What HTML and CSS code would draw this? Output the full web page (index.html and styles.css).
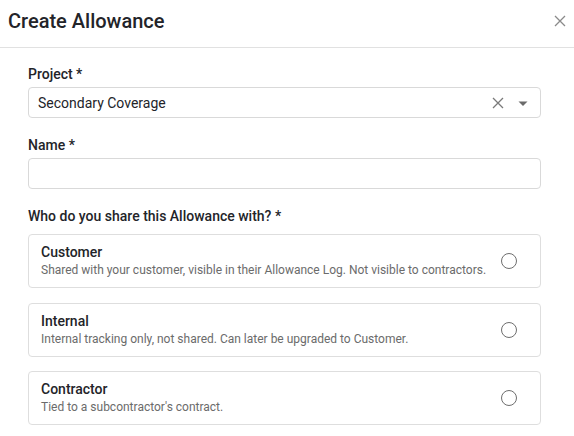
FILE: index.html
```html
<!DOCTYPE html>
<html lang="en">
<head>
<meta charset="utf-8">
<title>Create Allowance</title>
<link rel="stylesheet" href="styles.css">
</head>
<body>
<div class="dialog">
  <header class="dialog-header">
    <h1 class="dialog-title">Create Allowance</h1>
    <button class="icon-btn close-btn" aria-label="Close">
      <svg width="12" height="12" viewBox="0 0 12 12"><path d="M1 1L11 11M11 1L1 11" stroke="#8a8a8a" stroke-width="1.3" fill="none"/></svg>
    </button>
  </header>
  <main class="dialog-body">
    <div class="field">
      <label class="field-label">Project *</label>
      <div class="select">
        <span class="select-value">Secondary Coverage</span>
        <span class="select-clear">
          <svg width="12" height="12" viewBox="0 0 12 12"><path d="M1 1L11 11M11 1L1 11" stroke="#7a7a7a" stroke-width="1.3" fill="none"/></svg>
        </span>
        <span class="select-arrow">
          <svg width="10" height="5" viewBox="0 0 10 5"><path d="M0.5 0.5H9.5L5 5Z" fill="#6b6b6b"/></svg>
        </span>
      </div>
    </div>
    <div class="field">
      <label class="field-label">Name *</label>
      <input class="text-input" type="text">
    </div>
    <div class="field">
      <label class="field-label field-label-gap">Who do you share this Allowance with? *</label>
      <div class="options">
        <div class="option">
          <div class="option-text">
            <div class="option-title">Customer</div>
            <div class="option-desc">Shared with your customer, visible in their Allowance Log. Not visible to contractors.</div>
          </div>
          <span class="radio"></span>
        </div>
        <div class="option">
          <div class="option-text">
            <div class="option-title">Internal</div>
            <div class="option-desc">Internal tracking only, not shared. Can later be upgraded to Customer.</div>
          </div>
          <span class="radio"></span>
        </div>
        <div class="option">
          <div class="option-text">
            <div class="option-title">Contractor</div>
            <div class="option-desc">Tied to a subcontractor's contract.</div>
          </div>
          <span class="radio"></span>
        </div>
      </div>
    </div>
  </main>
</div>
</body>
</html>
```
FILE: styles.css
```css
* { box-sizing: border-box; }

html, body {
  margin: 0;
  padding: 0;
  background: #ffffff;
  font-family: Roboto, "Liberation Sans", Arial, sans-serif;
  color: #232429;
}

.dialog {
  width: 574px;
}

.dialog-header {
  height: 48px;
  display: flex;
  align-items: center;
  justify-content: space-between;
  padding: 0 8px 5px 8px;
  border-bottom: 1px solid #e1e1e1;
}

.dialog-title {
  margin: 0;
  font-size: 20px;
  font-weight: 500;
  line-height: 24px;
  color: #232429;
}

.icon-btn {
  border: 0;
  background: none;
  padding: 0;
  display: flex;
}

.dialog-body {
  padding: 16px 33px 0 28px;
  display: flex;
  flex-direction: column;
  gap: 17px;
}

.field {
  display: flex;
  flex-direction: column;
}

.field-label {
  font-size: 14px;
  font-weight: 500;
  line-height: 20px;
  margin-bottom: 3px;
  color: #232429;
}

.field-label-gap {
  margin-bottom: 8px;
}

.select,
.text-input {
  height: 31px;
  border: 1px solid #d9d9d9;
  border-radius: 4px;
  background: #fff;
}

.select {
  display: flex;
  align-items: center;
  padding: 0 12px 0 9px;
}

.select-value {
  flex: 1;
  font-size: 14px;
  color: #232429;
}

.select-clear {
  display: flex;
  margin-right: 14px;
}

.select-arrow {
  display: flex;
  margin-top: 1px;
}

.text-input {
  width: 100%;
  font: inherit;
  padding: 0 9px;
  outline: none;
}

.options {
  display: flex;
  flex-direction: column;
  gap: 14.5px;
}

.option {
  display: flex;
  align-items: center;
  height: 54px;
  padding: 0 23px 0 12px;
  border: 1px solid #dedede;
  border-radius: 4px;
}

.option-text {
  flex: 1;
  display: flex;
  flex-direction: column;
}

.option-title {
  font-size: 14px;
  font-weight: 500;
  line-height: 18px;
  color: #232429;
}

.option-desc {
  font-size: 12px;
  line-height: 18px;
  color: #6b6b6b;
}

.radio {
  width: 16px;
  height: 16px;
  border: 1.5px solid #6e6e6e;
  border-radius: 50%;
  flex: none;
}
```
